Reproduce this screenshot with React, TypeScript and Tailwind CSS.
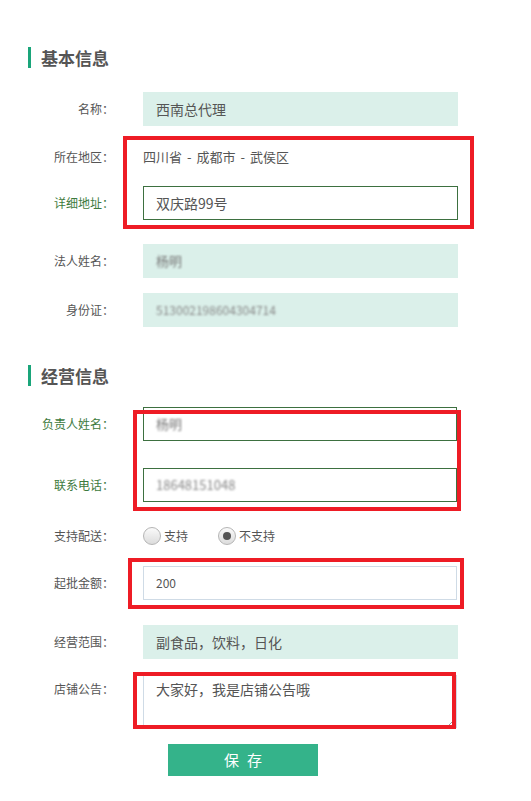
import React from "react";

const FONT = "font-['Noto_Sans_CJK_SC','Noto_Sans',sans-serif]";

function Label({ text, green }: { text: string; green?: boolean }) {
  return (
    <div
      className={`w-[114px] shrink-0 text-right text-[12px] ${
        green ? "text-[#3d7a3d]" : "text-[#555]"
      }`}
    >
      {text}：
    </div>
  );
}

function Heading({ text, mt }: { text: string; mt: string }) {
  return (
    <div className={`${mt} ml-[28px] flex h-[21px] items-center border-l-[3px] border-[#1aa57a] pl-[10px]`}>
      <span className="text-[17px] font-bold leading-none text-[#555]">{text}</span>
    </div>
  );
}

function Radio({ checked, label }: { checked?: boolean; label: string }) {
  return (
    <div className="flex items-center gap-[3px]">
      <div className="flex h-[18px] w-[18px] items-center justify-center rounded-full border border-[#b5b5b5] bg-gradient-to-b from-[#fafafa] to-[#dcdcdc]">
        {checked && <div className="h-[8px] w-[8px] rounded-full bg-[#555]" />}
      </div>
      <span className="text-[12px] text-[#555]">{label}</span>
    </div>
  );
}

export default function App() {
  return (
    <div className={`relative min-h-[801px] w-full overflow-hidden bg-white pt-[47px] ${FONT}`}>
      {/* ===== 基本信息 ===== */}
      <Heading text="基本信息" mt="mt-0" />

      <div className="mt-[24px] flex h-[34px] items-center gap-[29px]">
        <Label text="名称" />
        <div className="flex h-full w-[315px] items-center bg-[#dbf0ea] px-[13px] text-[14px] text-[#555]">
          西南总代理
        </div>
      </div>

      <div className="mt-[14px] flex h-[34px] items-center gap-[29px]">
        <Label text="所在地区" />
        <div className="flex items-center text-[13px] text-[#555]">
          <span>四川省</span>
          <span className="mx-[5px]">-</span>
          <span>成都市</span>
          <span className="mx-[5px]">-</span>
          <span>武侯区</span>
        </div>
      </div>

      <div className="mt-[12px] flex h-[34px] items-center gap-[29px]">
        <Label text="详细地址" green />
        <div className="flex h-full w-[315px] items-center border border-[#3d7040] px-[12px] text-[14px] text-[#555]">
          双庆路99号
        </div>
      </div>

      <div className="mt-[24px] flex h-[34px] items-center gap-[29px]">
        <Label text="法人姓名" />
        <div className="flex h-full w-[315px] items-center bg-[#dbf0ea] px-[13px] text-[13px] text-[#777]">
          <span className="blur-[1.2px]">杨明</span>
        </div>
      </div>

      <div className="mt-[15px] flex h-[34px] items-center gap-[29px]">
        <Label text="身份证" />
        <div className="flex h-full w-[315px] items-center bg-[#dbf0ea] px-[13px] text-[12px] text-[#888]">
          <span className="blur-[1px]">513002198604304714</span>
        </div>
      </div>

      {/* ===== 经营信息 ===== */}
      <Heading text="经营信息" mt="mt-[38px]" />

      <div className="mt-[21px] flex h-[34px] items-center gap-[29px]">
        <Label text="负责人姓名" green />
        <div className="flex h-full w-[314px] items-center border border-[#3d7040] px-[12px] text-[13px] text-[#777]">
          <span className="blur-[1.2px]">杨明</span>
        </div>
      </div>

      <div className="mt-[27px] flex h-[34px] items-center gap-[29px]">
        <Label text="联系电话" green />
        <div className="flex h-full w-[314px] items-center border border-[#3d7040] px-[12px] text-[13px] text-[#888]">
          <span className="blur-[0.8px]">18648151048</span>
        </div>
      </div>

      <div className="mt-[17px] flex h-[34px] items-center gap-[29px]">
        <Label text="支持配送" />
        <div className="flex items-center gap-[30px]">
          <Radio label="支持" />
          <Radio label="不支持" checked />
        </div>
      </div>

      <div className="mt-[13px] flex h-[34px] items-center gap-[29px]">
        <Label text="起批金额" />
        <div className="flex h-full w-[314px] items-center border border-[#cfdbe6] px-[12px] text-[12px] text-[#555]">
          200
        </div>
      </div>

      <div className="mt-[25px] flex h-[34px] items-center gap-[29px]">
        <Label text="经营范围" />
        <div className="flex h-full w-[315px] items-center bg-[#dbf0ea] px-[13px] text-[14px] text-[#555]">
          副食品，饮料，日化
        </div>
      </div>

      <div className="mt-[16px] flex items-start gap-[29px]">
        <div className="pt-[5px]">
          <Label text="店铺公告" />
        </div>
        <div className="relative h-[53px] w-[314px] border border-[#cfdbe6] px-[12px] pt-[3px] text-[14px] text-[#555]">
          大家好，我是店铺公告哦
          <svg className="absolute bottom-[1px] right-[1px]" width="7" height="7" viewBox="0 0 7 7">
            <path d="M1 6 L6 1 M4 6 L6 4" stroke="#999" strokeWidth="1" />
          </svg>
        </div>
      </div>

      <div className="ml-[168px] mt-[16px] flex h-[32px] w-[150px] items-center justify-center bg-[#34b38a] text-[15px] tracking-[8px] text-white">
        <span className="pl-[8px]">保存</span>
      </div>

      {/* ===== annotation boxes ===== */}
      <div className="pointer-events-none absolute left-[123px] top-[136px] h-[93px] w-[351px] border-[4px] border-[#ee1c25]" />
      <div className="pointer-events-none absolute left-[133px] top-[410px] h-[101px] w-[328px] border-[4px] border-[#ee1c25]" />
      <div className="pointer-events-none absolute left-[128px] top-[558px] h-[51px] w-[336px] border-[4px] border-[#ee1c25]" />
      <div className="pointer-events-none absolute left-[133px] top-[672px] h-[57px] w-[323px] border-[4px] border-[#ee1c25]" />
    </div>
  );
}
